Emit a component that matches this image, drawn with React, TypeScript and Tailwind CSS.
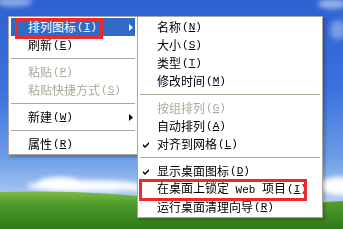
import type { ReactNode } from "react";
import clsx from "clsx";

interface RowProps {
  label: ReactNode;
  hot: string;
  active?: boolean;
  disabled?: boolean;
  checked?: boolean;
  arrow?: boolean;
}

function Check() {
  return (
    <svg width="7" height="7" viewBox="0 0 7 7" className="block">
      <path d="M0 3 L2 5 L6 1 L6 3 L2 7 L0 5 Z" fill="currentColor" />
    </svg>
  );
}

function Arrow() {
  return (
    <svg width="4" height="7" viewBox="0 0 4 7" className="block">
      <path d="M0 0 L4 3.5 L0 7 Z" fill="currentColor" />
    </svg>
  );
}

function Row({ label, hot, active, disabled, checked, arrow }: RowProps) {
  return (
    <div
      className={clsx(
        "flex items-center h-[18px] pr-[2px] whitespace-nowrap",
        active ? "bg-[#316ac5] text-white" : disabled ? "text-[#aca899]" : "text-black"
      )}
    >
      {/* Check gutter */}
      <div className="w-[17px] flex-shrink-0 flex justify-start pl-[3px]">{checked && <Check />}</div>
      <span className="leading-[18px]">{label}</span>
      <span className="font-['Liberation_Mono',monospace] text-[11px] leading-[18px] ml-[1px]">
        (<span className="underline underline-offset-[1px]">{hot}</span>)
      </span>
      <div className="flex-1" />
      {arrow && <Arrow />}
    </div>
  );
}

function Sep() {
  return (
    <div className="h-[9px] flex items-center">
      <div className="h-px w-full bg-[#aca899]" />
    </div>
  );
}

function Wallpaper() {
  return (
    <svg width="343" height="229" viewBox="0 0 343 229" className="block">
      <defs>
        <linearGradient id="sky" x1="0" y1="0" x2="0" y2="1">
          <stop offset="0" stopColor="#2d62d1" />
          <stop offset="0.4" stopColor="#3b72de" />
          <stop offset="0.68" stopColor="#6b9be6" />
          <stop offset="0.82" stopColor="#9dbff0" />
          <stop offset="0.9" stopColor="#b9d2f3" />
        </linearGradient>
        <linearGradient id="grass" x1="0" y1="0" x2="0" y2="1">
          <stop offset="0" stopColor="#7cbc48" />
          <stop offset="0.35" stopColor="#4f9a2a" />
          <stop offset="1" stopColor="#2f7a18" />
        </linearGradient>
        <filter id="soft" x="-20%" y="-50%" width="140%" height="200%">
          <feGaussianBlur stdDeviation="2.5" />
        </filter>
      </defs>
      <rect width="343" height="229" fill="url(#sky)" />
      {/* Clouds */}
      <g fill="#ffffff" filter="url(#soft)">
        <ellipse cx="14" cy="2" rx="18" ry="5" opacity="0.45" />
        <ellipse cx="332" cy="4" rx="14" ry="5" opacity="0.5" />
        <ellipse cx="338" cy="30" rx="8" ry="10" opacity="0.35" />
        <ellipse cx="85" cy="186" rx="58" ry="6" opacity="0.95" />
        <ellipse cx="60" cy="183" rx="22" ry="6" />
        <ellipse cx="190" cy="188" rx="70" ry="5" opacity="0.8" />
        <ellipse cx="340" cy="186" rx="22" ry="9" />
      </g>
      {/* Hill */}
      <path d="M0 192 C 60 190 120 193 180 200 C 240 207 300 203 343 201 L343 229 L0 229 Z" fill="url(#grass)" />
    </svg>
  );
}

export default function App() {
  return (
    <div className="relative w-[343px] h-[229px] overflow-hidden font-['Noto_Sans_CJK_SC','Noto_Sans',sans-serif] text-[12px]">
      <Wallpaper />

      {/* Desktop context menu */}
      <div className="absolute left-[8px] top-[16px] w-[130px] bg-white border border-[#aca899] px-[2px] py-px shadow-[2px_2px_3px_rgba(0,0,0,0.25)]">
        <Row label="排列图标" hot="I" active arrow />
        <Row label="刷新" hot="E" />
        <Sep />
        <Row label="粘贴" hot="P" disabled />
        <Row label="粘贴快捷方式" hot="S" disabled />
        <Sep />
        <Row label="新建" hot="W" arrow />
        <Sep />
        <Row label="属性" hot="R" />
      </div>

      {/* Arrange icons submenu */}
      <div className="absolute left-[137px] top-[16px] w-[186px] bg-white border border-[#aca899] px-[2px] py-px shadow-[2px_2px_3px_rgba(0,0,0,0.25)]">
        <Row label="名称" hot="N" />
        <Row label="大小" hot="S" />
        <Row label="类型" hot="T" />
        <Row label="修改时间" hot="M" />
        <Sep />
        <Row label="按组排列" hot="G" disabled />
        <Row label="自动排列" hot="A" />
        <Row label="对齐到网格" hot="L" checked />
        <Sep />
        <Row label="显示桌面图标" hot="D" checked />
        <Row
          label={
            <>
              在桌面上锁定
              <span className="font-['Liberation_Mono',monospace] text-[11px] whitespace-pre"> Web </span>
              项目
            </>
          }
          hot="I"
        />
        <Row label="运行桌面清理向导" hot="R" />
      </div>

      {/* Red annotation boxes */}
      <div className="absolute left-[15px] top-[18px] w-[88px] h-[21px] border-[3px] border-[#ea2a2f]" />
      <div className="absolute left-[139px] top-[179px] w-[168px] h-[22px] border-[3px] border-[#ea2a2f]" />
    </div>
  );
}
